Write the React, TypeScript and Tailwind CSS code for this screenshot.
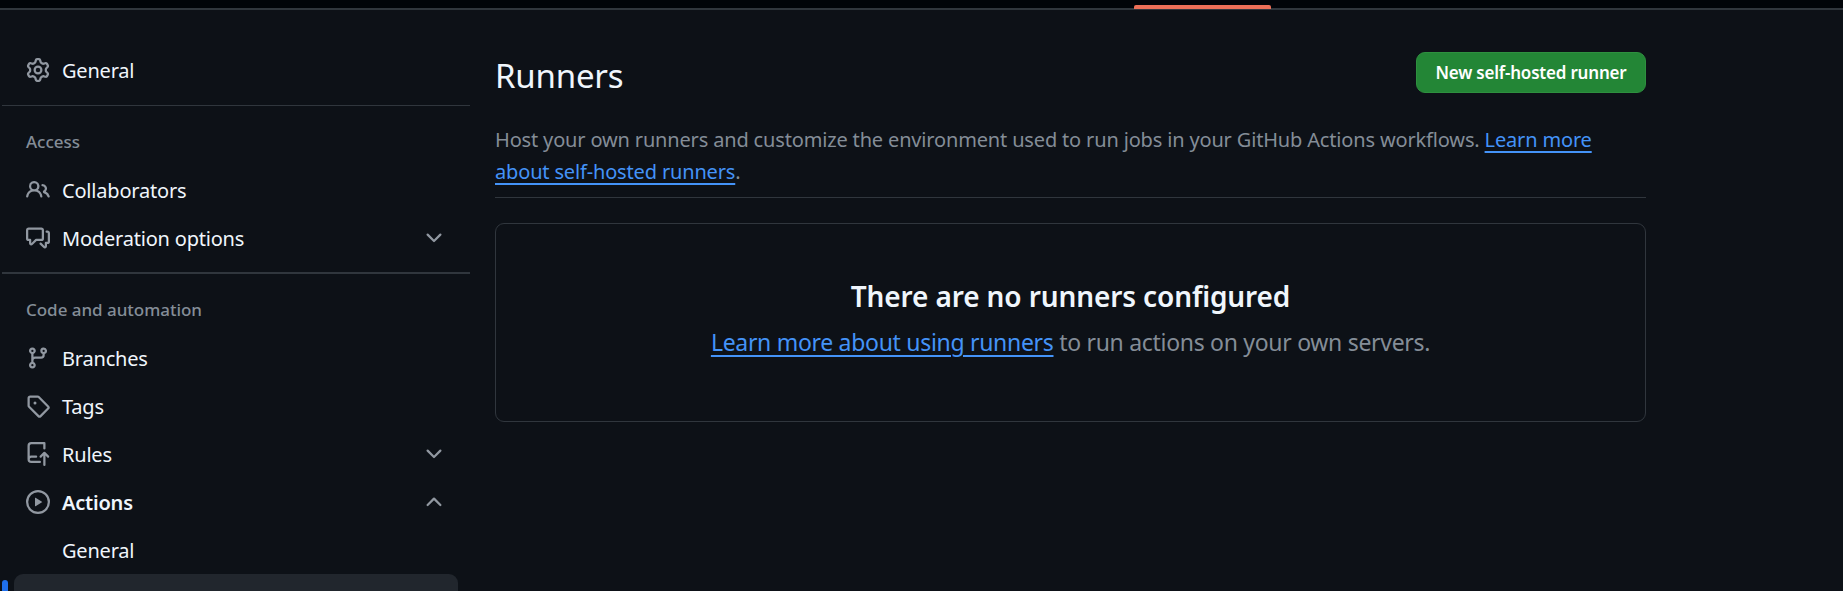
import React from 'react';

// Octicons, 16px grid
const ICONS = {
  gear: 'M8 0a8.2 8.2 0 0 1 .701.031C9.444.095 9.99.645 10.16 1.29l.288 1.107c.018.066.079.158.212.224.231.114.454.243.668.386.123.082.233.09.299.071l1.103-.303c.644-.176 1.392.021 1.82.63.27.385.506.792.704 1.218.315.675.111 1.422-.364 1.891l-.814.806c-.049.048-.098.147-.088.294.016.257.016.515 0 .772-.01.147.038.246.088.294l.814.806c.475.469.679 1.216.364 1.891a7.977 7.977 0 0 1-.704 1.217c-.428.61-1.176.807-1.82.63l-1.102-.302c-.067-.019-.177-.011-.3.071a5.909 5.909 0 0 1-.668.386c-.133.066-.194.158-.211.224l-.29 1.106c-.168.646-.715 1.196-1.458 1.26a8.006 8.006 0 0 1-1.402 0c-.743-.064-1.289-.614-1.458-1.26l-.289-1.106c-.018-.066-.079-.158-.212-.224a5.738 5.738 0 0 1-.668-.386c-.123-.082-.233-.09-.299-.071l-1.103.303c-.644.176-1.392-.021-1.82-.63a8.12 8.12 0 0 1-.704-1.218c-.315-.675-.111-1.422.363-1.891l.815-.806c.05-.048.098-.147.088-.294a6.214 6.214 0 0 1 0-.772c.01-.147-.038-.246-.088-.294l-.815-.806C.635 6.045.431 5.298.746 4.623a7.92 7.92 0 0 1 .704-1.217c.428-.61 1.176-.807 1.82-.63l1.102.302c.067.019.177.011.3-.071.214-.143.437-.272.668-.386.133-.066.194-.158.211-.224l.29-1.106C6.009.645 6.556.095 7.299.03 7.53.01 7.764 0 8 0Zm-.571 1.525c-.036.003-.108.036-.137.146l-.289 1.105c-.147.561-.549.967-.998 1.189-.173.086-.34.183-.5.29-.417.278-.97.423-1.529.27l-1.103-.303c-.109-.03-.175.016-.195.045-.22.312-.412.644-.573.99-.014.031-.021.11.059.19l.815.806c.411.406.562.957.53 1.456a4.709 4.709 0 0 0 0 .582c.032.499-.119 1.05-.53 1.456l-.815.806c-.081.08-.073.159-.059.19.162.346.353.677.573.989.02.03.085.076.195.046l1.102-.303c.56-.153 1.113-.008 1.53.27.161.107.328.204.501.29.447.222.85.629.997 1.189l.289 1.105c.029.109.101.143.137.146a6.6 6.6 0 0 0 1.142 0c.036-.003.108-.036.137-.146l.289-1.105c.147-.561.549-.967.998-1.189.173-.086.34-.183.5-.29.417-.278.97-.423 1.529-.27l1.103.303c.109.029.175-.016.195-.045.22-.313.411-.644.573-.99.014-.031.021-.11-.059-.19l-.815-.806c-.411-.406-.562-.957-.53-1.456a4.709 4.709 0 0 0 0-.582c-.032-.499.119-1.05.53-1.456l.815-.806c.081-.08.073-.159.059-.19a6.464 6.464 0 0 0-.573-.989c-.02-.03-.085-.076-.195-.046l-1.102.303c-.56.153-1.113.008-1.53-.27a4.44 4.44 0 0 0-.501-.29c-.447-.222-.85-.629-.997-1.189l-.289-1.105c-.029-.11-.101-.143-.137-.146a6.6 6.6 0 0 0-1.142 0ZM11 8a3 3 0 1 1-6 0 3 3 0 0 1 6 0ZM9.5 8a1.5 1.5 0 1 0-3.001.001A1.5 1.5 0 0 0 9.5 8Z',
  people: 'M2 5.5a3.5 3.5 0 1 1 5.898 2.549 5.508 5.508 0 0 1 3.034 4.084.75.75 0 1 1-1.482.235 4 4 0 0 0-7.9 0 .75.75 0 0 1-1.482-.236A5.507 5.507 0 0 1 3.102 8.05 3.493 3.493 0 0 1 2 5.5ZM11 4a3.001 3.001 0 0 1 2.22 5.018 5.01 5.01 0 0 1 2.56 3.012.749.749 0 0 1-.885.954.752.752 0 0 1-.549-.514 3.507 3.507 0 0 0-2.522-2.372.75.75 0 0 1-.574-.73v-.352a.75.75 0 0 1 .416-.672A1.5 1.5 0 0 0 11 5.5.75.75 0 0 1 11 4Zm-5.5-.5a2 2 0 1 0-.001 3.999A2 2 0 0 0 5.5 3.5Z',
  comment: 'M1.75 1h8.5c.966 0 1.75.784 1.75 1.75v5.5A1.75 1.75 0 0 1 10.25 10H7.061l-2.574 2.573A1.458 1.458 0 0 1 2 11.543V10h-.25A1.75 1.75 0 0 1 0 8.25v-5.5C0 1.784.784 1 1.75 1ZM1.5 2.75v5.5c0 .138.112.25.25.25h1a.75.75 0 0 1 .75.75v2.19l2.72-2.72a.749.749 0 0 1 .53-.22h3.5a.25.25 0 0 0 .25-.25v-5.5a.25.25 0 0 0-.25-.25h-8.5a.25.25 0 0 0-.25.25Zm13 2a.25.25 0 0 0-.25-.25h-.5a.75.75 0 0 1 0-1.5h.5c.966 0 1.75.784 1.75 1.75v5.5A1.75 1.75 0 0 1 14.25 12H14v1.543a1.458 1.458 0 0 1-2.487 1.03L9.22 12.28a.749.749 0 0 1 .326-1.275.749.749 0 0 1 .734.215l2.22 2.22v-2.19a.75.75 0 0 1 .75-.75h1a.25.25 0 0 0 .25-.25Z',
  branch: 'M9.5 3.25a2.25 2.25 0 1 1 3 2.122V6A2.5 2.5 0 0 1 10 8.5H6a1 1 0 0 0-1 1v1.128a2.251 2.251 0 1 1-1.5 0V5.372a2.25 2.25 0 1 1 1.5 0v1.836A2.493 2.493 0 0 1 6 7h4a1 1 0 0 0 1-1v-.628A2.25 2.25 0 0 1 9.5 3.25Zm-6 0a.75.75 0 1 0 1.5 0 .75.75 0 0 0-1.5 0Zm8.25-.75a.75.75 0 1 0 0 1.5.75.75 0 0 0 0-1.5ZM4.25 12a.75.75 0 1 0 0 1.5.75.75 0 0 0 0-1.5Z',
  tag: 'M1 7.775V2.75C1 1.784 1.784 1 2.75 1h5.025c.464 0 .91.184 1.238.513l6.25 6.25a1.75 1.75 0 0 1 0 2.474l-5.026 5.026a1.75 1.75 0 0 1-2.474 0l-6.25-6.25A1.746 1.746 0 0 1 1 7.775Zm1.5 0c0 .066.026.13.073.177l6.25 6.25a.25.25 0 0 0 .354 0l5.025-5.025a.25.25 0 0 0 0-.354l-6.25-6.25a.25.25 0 0 0-.177-.073H2.75a.25.25 0 0 0-.25.25ZM6 5a1 1 0 1 1 0 2 1 1 0 0 1 0-2Z',
  repoPush: 'M1 2.5A2.5 2.5 0 0 1 3.5 0h8.75a.75.75 0 0 1 .75.75v3.5a.75.75 0 0 1-1.5 0V1.5h-8a1 1 0 0 0-1 1v6.708A2.493 2.493 0 0 1 3.5 9h3.25a.75.75 0 0 1 0 1.5H3.5a1 1 0 0 0 0 2h5.75a.75.75 0 0 1 0 1.5H3.5A2.5 2.5 0 0 1 1 11.5Zm13.23 7.79h-.001l-1.224-1.224v6.184a.75.75 0 0 1-1.5 0V9.066L10.28 10.29a.75.75 0 0 1-1.06-1.061l2.505-2.504a.75.75 0 0 1 1.06 0L15.29 9.23a.751.751 0 0 1-.018 1.042.751.751 0 0 1-1.042.018Z',
  play: 'M8 0a8 8 0 1 1 0 16A8 8 0 0 1 8 0ZM1.5 8a6.5 6.5 0 1 0 13 0 6.5 6.5 0 0 0-13 0Zm4.879-2.773 4.264 2.559a.25.25 0 0 1 0 .428l-4.264 2.559A.25.25 0 0 1 6 10.559V5.442a.25.25 0 0 1 .379-.215Z',
  chevronDown: 'M12.78 5.22a.749.749 0 0 1 0 1.06l-4.25 4.25a.749.749 0 0 1-1.06 0L3.22 6.28a.749.749 0 1 1 1.06-1.06L8 8.939l3.72-3.72a.749.749 0 0 1 1.06 0Z',
  chevronUp: 'M3.22 10.53a.749.749 0 0 1 0-1.06l4.25-4.25a.749.749 0 0 1 1.06 0l4.25 4.25a.749.749 0 1 1-1.06 1.06L8 6.811 4.28 10.53a.749.749 0 0 1-1.06 0Z',
};

type IconName = keyof typeof ICONS;

function Octicon({ name }: { name: IconName }) {
  return (
    <svg viewBox="0 0 16 16" className="h-[24px] w-[24px] shrink-0 fill-[#9198a1]">
      <path d={ICONS[name]} />
    </svg>
  );
}

interface NavRowProps {
  icon?: IconName;
  label?: string;
  bold?: boolean;
  chevron?: 'chevronUp' | 'chevronDown';
  active?: boolean;
}

function NavRow({ icon, label, bold, chevron, active }: NavRowProps) {
  return (
    <div className="relative">
      {active && (
        <span className="absolute left-0 top-[6px] h-[36px] w-[6px] rounded-[4px] bg-[#1f6feb]" />
      )}
      <div
        className={`mx-[12px] flex h-[48px] items-center rounded-[9px] px-[12px] ${
          active ? 'bg-[#21262d]' : ''
        }`}
      >
        <span className="flex w-[36px] shrink-0 items-center">{icon && <Octicon name={icon} />}</span>
        <span
          className={`flex-1 pt-[2px] text-[20px] tracking-[-0.2px] text-[#f0f6fc] ${bold ? 'font-semibold' : ''}`}
        >
          {label}
        </span>
        {chevron && <Octicon name={chevron} />}
      </div>
    </div>
  );
}

function SectionLabel({ children }: { children: React.ReactNode }) {
  return (
    <div className="flex h-[24px] items-center pl-[24px] text-[17px] font-medium tracking-[-0.03px] text-[#848d97]">
      {children}
    </div>
  );
}

export default function App() {
  return (
    <div className="h-[591px] w-full overflow-hidden bg-[#0d1117] font-['Noto_Sans',sans-serif]">
      {/* Top strip with the orange tab marker */}
      <div className="relative h-[10px] border-b-2 border-[#30363d] bg-[#010409]">
        <span className="absolute left-[1134px] top-[5px] h-[4px] w-[137px] rounded-t-[2px] bg-[#ec6f58]" />
      </div>

      <div className="flex">
        <aside className="ml-[2px] w-[468px] shrink-0 pt-[36px]">
          <NavRow icon="gear" label="General" />
          <div className="mt-[11px] h-px bg-[#30363d]" />
          <div className="mt-[24px]">
            <SectionLabel>Access</SectionLabel>
          </div>
          <div className="mt-[12px]">
            <NavRow icon="people" label="Collaborators" />
            <NavRow icon="comment" label="Moderation options" chevron="chevronDown" />
          </div>
          <div className="mt-[10px] h-[2px] bg-[#30363d]" />
          <div className="mt-[24px]">
            <SectionLabel>Code and automation</SectionLabel>
          </div>
          <div className="mt-[12px]">
            <NavRow icon="branch" label="Branches" />
            <NavRow icon="tag" label="Tags" />
            <NavRow icon="repoPush" label="Rules" chevron="chevronDown" />
            <NavRow icon="play" label="Actions" bold chevron="chevronUp" />
            <NavRow label="General" />
            {/* selected row, its label falls below the fold */}
            <NavRow active />
          </div>
        </aside>

        <main className="ml-[25px] w-[1151px] shrink-0 pt-[42px]">
          <div className="flex items-start justify-between">
            <h1 className="mt-[3px] text-[33px] font-normal leading-[42px] tracking-[-0.2px] text-[#f0f6fc]">
              Runners
            </h1>
            <button className="flex h-[41px] w-[230px] items-center justify-center rounded-[9px] border border-[#2e903f] bg-[#238636] pt-[1px] text-[17px] font-semibold tracking-[-0.2px] text-white">
              New self-hosted runner
            </button>
          </div>

          <p className="mt-[27px] text-[20px] leading-[32px] tracking-[-0.16px] text-[#848d97]">
            Host your own runners and customize the environment used to run jobs in your GitHub Actions workflows.{' '}
            <a className="text-[#4493f8] underline decoration-2 underline-offset-4">Learn more</a>
            <br />
            <a className="text-[#4493f8] underline decoration-2 underline-offset-4">about self-hosted runners</a>.
          </p>
          <div className="mt-[9px] h-px bg-[#30363d]" />

          <section className="mt-[25px] flex h-[199px] flex-col items-center rounded-[9px] border border-[#30363d] pt-[51px]">
            <h2 className="text-[28px] font-semibold leading-[42px] tracking-[-0.12px] text-[#f0f6fc]">
              There are no runners configured
            </h2>
            <p className="mt-[7px] text-[23px] leading-[36px] tracking-[-0.3px] text-[#848d97]">
              <a className="text-[#4493f8] underline decoration-2 underline-offset-4">Learn more about using runners</a>{' '}
              to run actions on your own servers.
            </p>
          </section>
        </main>
      </div>
    </div>
  );
}
